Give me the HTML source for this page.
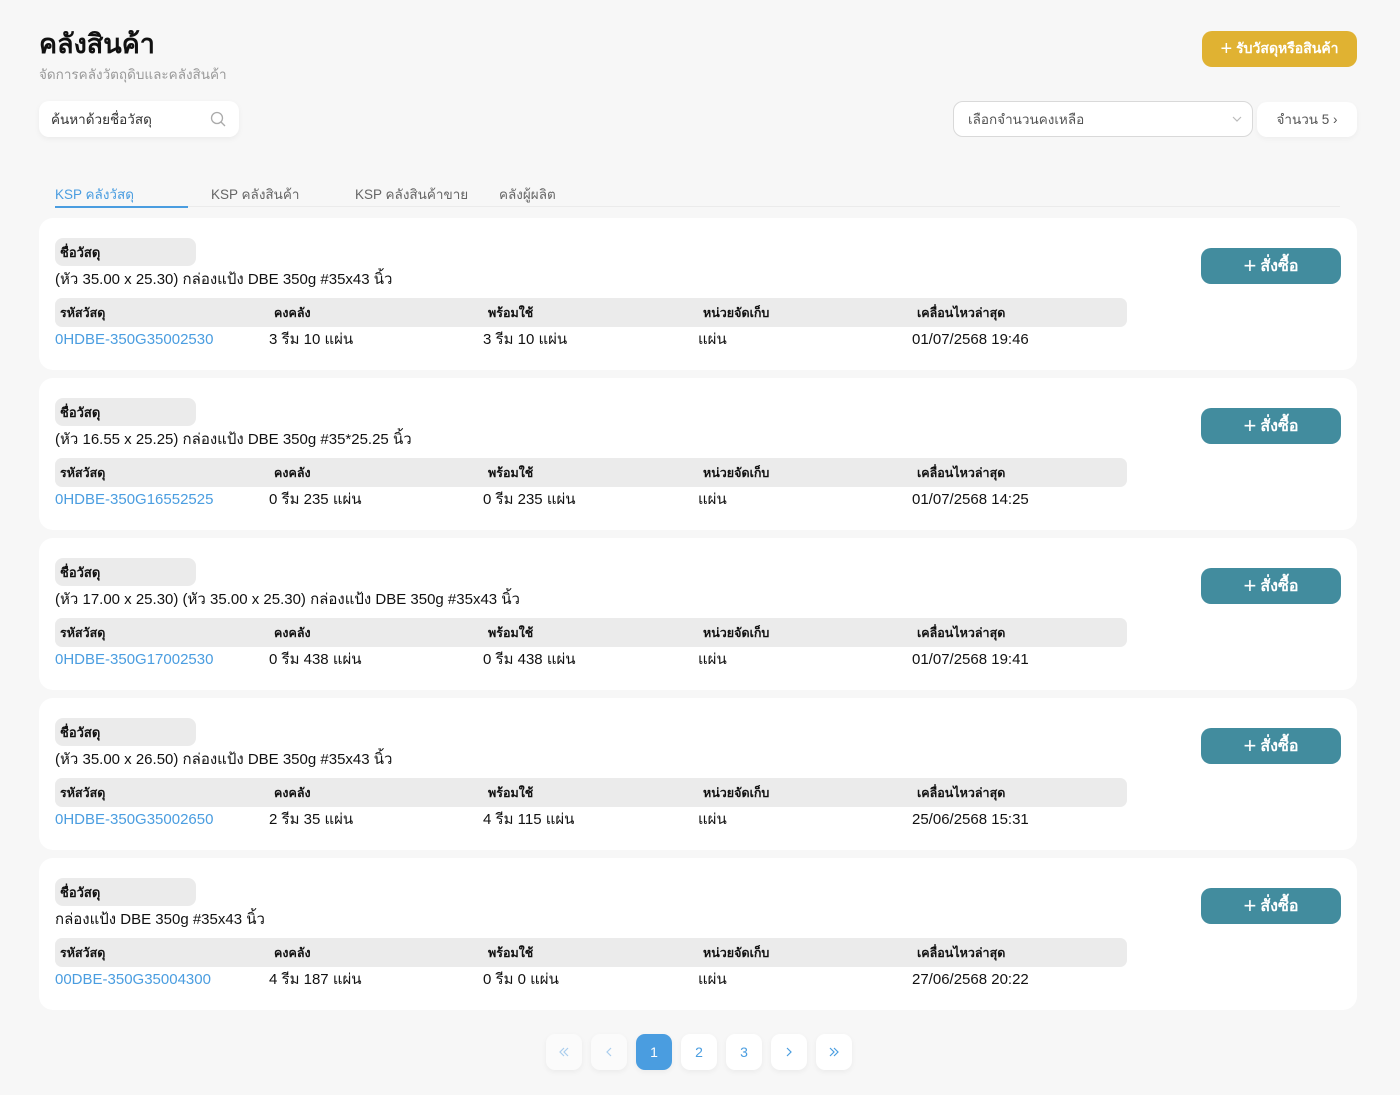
<!DOCTYPE html>
<html><head><meta charset="utf-8"><style>
*{box-sizing:border-box;margin:0;padding:0}
body{width:1400px;height:1095px;background:#f7f7f7;font-family:"Liberation Sans","Noto Sans CJK SC",sans-serif;color:#111;position:relative;overflow:hidden}
.abs{position:absolute}
h1{position:absolute;left:39px;top:27px;font-size:27px;line-height:34px;font-weight:700;color:#111}
.sub{left:39px;top:65px;font-size:13.5px;line-height:20px;color:#999}
.ybtn{left:1202px;top:31px;width:155px;height:36px;background:#e0b232;border-radius:10px;color:#fff;font-size:14px;font-weight:700;display:flex;align-items:center;justify-content:center}
.search{left:39px;top:101px;width:200px;height:36px;background:#fff;border-radius:10px;box-shadow:0 2px 6px rgba(0,0,0,.05);font-size:13.5px;line-height:18px;color:#333;padding:10px 12px 0}
.sel{left:953px;top:101px;width:300px;height:36px;background:#fff;border:1px solid #d9d9d9;border-radius:10px;font-size:13.5px;line-height:18px;color:#555;padding:9px 14px 0}
.cnt{left:1257px;top:102px;width:100px;height:35px;background:#fff;border-radius:10px;font-size:13.5px;line-height:18px;color:#555;text-align:center;padding-top:9px;box-shadow:0 2px 6px rgba(0,0,0,.04)}
.tab{top:185px;font-size:13.5px;line-height:20px;color:#666}
.card{left:39px;width:1318px;height:152px;background:#fff;border-radius:14px}
.lbl{position:absolute;left:16px;top:20px;width:141px;height:28px;background:#ebebeb;border-radius:8px;font-size:13px;line-height:18px;font-weight:700;padding:6px 5px 0}
.nm{position:absolute;left:16px;top:52px;font-size:15px;line-height:20px;height:20px}
.hdr{position:absolute;left:16px;top:80px;width:1072px;height:29px;background:#ebebeb;border-radius:7px}
.hdr span{position:absolute;top:6px;font-size:12.5px;line-height:18px;font-weight:700}
.val{position:absolute;top:112px;font-size:15px;line-height:20px;height:20px}
.bb{position:absolute;left:1162px;top:30px;width:140px;height:36px;background:#428c9e;border-radius:10px;color:#fff;font-size:16px;font-weight:700;display:flex;align-items:center;justify-content:center}
.pg{top:1034px;width:36px;height:36px;background:#fff;border-radius:9px;box-shadow:0 2px 6px rgba(0,0,0,.05);color:#4a9de0;font-size:14px;display:flex;align-items:center;justify-content:center}
</style></head><body>
<h1>คลังสินค้า</h1>
<div class="abs sub">จัดการคลังวัตถุดิบและคลังสินค้า</div>
<div class="abs ybtn"><span style="font-weight:300;font-size:20px;margin-right:4px">+</span>รับวัสดุหรือสินค้า</div>
<div class="abs search">ค้นหาด้วยชื่อวัสดุ<svg class="abs" style="left:171px;top:10px" width="16" height="16" viewBox="0 0 16 16" fill="none" stroke="#aaa" stroke-width="1.3"><circle cx="7" cy="7" r="5.5"/><path d="M11 11l4 4"/></svg></div>
<div class="abs sel">เลือกจำนวนคงเหลือ<svg class="abs" style="left:278px;top:14px" width="10" height="7" viewBox="0 0 10 7" fill="none" stroke="#bbb" stroke-width="1.2"><path d="M1 1l4 4 4-4"/></svg></div>
<div class="abs cnt">จำนวน 5 ›</div>
<div class="abs tab" style="left:55px;color:#4a9de0">KSP คลังวัสดุ</div>
<div class="abs tab" style="left:211px">KSP คลังสินค้า</div>
<div class="abs tab" style="left:355px">KSP คลังสินค้าขาย</div>
<div class="abs tab" style="left:499px">คลังผู้ผลิต</div>
<div class="abs" style="left:55px;top:206px;width:1285px;height:1px;background:#ebebeb"></div>
<div class="abs" style="left:55px;top:206px;width:133px;height:2px;background:#4a9de0"></div>

<div class="abs card" style="top:218px"><div class="lbl">ชื่อวัสดุ</div><div class="nm">(หัว 35.00 x 25.30) กล่องแป้ง DBE 350g #35x43 นิ้ว</div>
<div class="hdr"><span style="left:5px">รหัสวัสดุ</span><span style="left:219px">คงคลัง</span><span style="left:433px">พร้อมใช้</span><span style="left:648px">หน่วยจัดเก็บ</span><span style="left:862px">เคลื่อนไหวล่าสุด</span></div>
<div class="val" style="left:16px;color:#4a9de0">0HDBE-350G35002530</div><div class="val" style="left:230px">3 รีม 10 แผ่น</div><div class="val" style="left:444px">3 รีม 10 แผ่น</div><div class="val" style="left:659px">แผ่น</div><div class="val" style="left:873px">01/07/2568 19:46</div>
<div class="bb"><span style="font-weight:300;font-size:22px;margin-right:4px">+</span>สั่งซื้อ</div></div>

<div class="abs card" style="top:378px"><div class="lbl">ชื่อวัสดุ</div><div class="nm">(หัว 16.55 x 25.25) กล่องแป้ง DBE 350g #35*25.25 นิ้ว</div>
<div class="hdr"><span style="left:5px">รหัสวัสดุ</span><span style="left:219px">คงคลัง</span><span style="left:433px">พร้อมใช้</span><span style="left:648px">หน่วยจัดเก็บ</span><span style="left:862px">เคลื่อนไหวล่าสุด</span></div>
<div class="val" style="left:16px;color:#4a9de0">0HDBE-350G16552525</div><div class="val" style="left:230px">0 รีม 235 แผ่น</div><div class="val" style="left:444px">0 รีม 235 แผ่น</div><div class="val" style="left:659px">แผ่น</div><div class="val" style="left:873px">01/07/2568 14:25</div>
<div class="bb"><span style="font-weight:300;font-size:22px;margin-right:4px">+</span>สั่งซื้อ</div></div>

<div class="abs card" style="top:538px"><div class="lbl">ชื่อวัสดุ</div><div class="nm">(หัว 17.00 x 25.30) (หัว 35.00 x 25.30) กล่องแป้ง DBE 350g #35x43 นิ้ว</div>
<div class="hdr"><span style="left:5px">รหัสวัสดุ</span><span style="left:219px">คงคลัง</span><span style="left:433px">พร้อมใช้</span><span style="left:648px">หน่วยจัดเก็บ</span><span style="left:862px">เคลื่อนไหวล่าสุด</span></div>
<div class="val" style="left:16px;color:#4a9de0">0HDBE-350G17002530</div><div class="val" style="left:230px">0 รีม 438 แผ่น</div><div class="val" style="left:444px">0 รีม 438 แผ่น</div><div class="val" style="left:659px">แผ่น</div><div class="val" style="left:873px">01/07/2568 19:41</div>
<div class="bb"><span style="font-weight:300;font-size:22px;margin-right:4px">+</span>สั่งซื้อ</div></div>

<div class="abs card" style="top:698px"><div class="lbl">ชื่อวัสดุ</div><div class="nm">(หัว 35.00 x 26.50) กล่องแป้ง DBE 350g #35x43 นิ้ว</div>
<div class="hdr"><span style="left:5px">รหัสวัสดุ</span><span style="left:219px">คงคลัง</span><span style="left:433px">พร้อมใช้</span><span style="left:648px">หน่วยจัดเก็บ</span><span style="left:862px">เคลื่อนไหวล่าสุด</span></div>
<div class="val" style="left:16px;color:#4a9de0">0HDBE-350G35002650</div><div class="val" style="left:230px">2 รีม 35 แผ่น</div><div class="val" style="left:444px">4 รีม 115 แผ่น</div><div class="val" style="left:659px">แผ่น</div><div class="val" style="left:873px">25/06/2568 15:31</div>
<div class="bb"><span style="font-weight:300;font-size:22px;margin-right:4px">+</span>สั่งซื้อ</div></div>

<div class="abs card" style="top:858px"><div class="lbl">ชื่อวัสดุ</div><div class="nm">กล่องแป้ง DBE 350g #35x43 นิ้ว</div>
<div class="hdr"><span style="left:5px">รหัสวัสดุ</span><span style="left:219px">คงคลัง</span><span style="left:433px">พร้อมใช้</span><span style="left:648px">หน่วยจัดเก็บ</span><span style="left:862px">เคลื่อนไหวล่าสุด</span></div>
<div class="val" style="left:16px;color:#4a9de0">00DBE-350G35004300</div><div class="val" style="left:230px">4 รีม 187 แผ่น</div><div class="val" style="left:444px">0 รีม 0 แผ่น</div><div class="val" style="left:659px">แผ่น</div><div class="val" style="left:873px">27/06/2568 20:22</div>
<div class="bb"><span style="font-weight:300;font-size:22px;margin-right:4px">+</span>สั่งซื้อ</div></div>

<div class="abs pg" style="left:546px;background:#fbfbfb"><svg width="12" height="12" viewBox="0 0 12 12" fill="none" stroke="#a9cdee" stroke-width="1.2"><path d="M6 2L2 6l4 4M10 2L6 6l4 4"/></svg></div>
<div class="abs pg" style="left:591px;background:#fbfbfb"><svg width="12" height="12" viewBox="0 0 12 12" fill="none" stroke="#a9cdee" stroke-width="1.2"><path d="M8 2L4 6l4 4"/></svg></div>
<div class="abs pg" style="left:636px;background:#4a9de0;color:#fff">1</div>
<div class="abs pg" style="left:681px">2</div>
<div class="abs pg" style="left:726px">3</div>
<div class="abs pg" style="left:771px"><svg width="12" height="12" viewBox="0 0 12 12" fill="none" stroke="#4a9de0" stroke-width="1.2"><path d="M4 2l4 4-4 4"/></svg></div>
<div class="abs pg" style="left:816px"><svg width="12" height="12" viewBox="0 0 12 12" fill="none" stroke="#4a9de0" stroke-width="1.2"><path d="M2 2l4 4-4 4M6 2l4 4-4 4"/></svg></div>
</body></html>
